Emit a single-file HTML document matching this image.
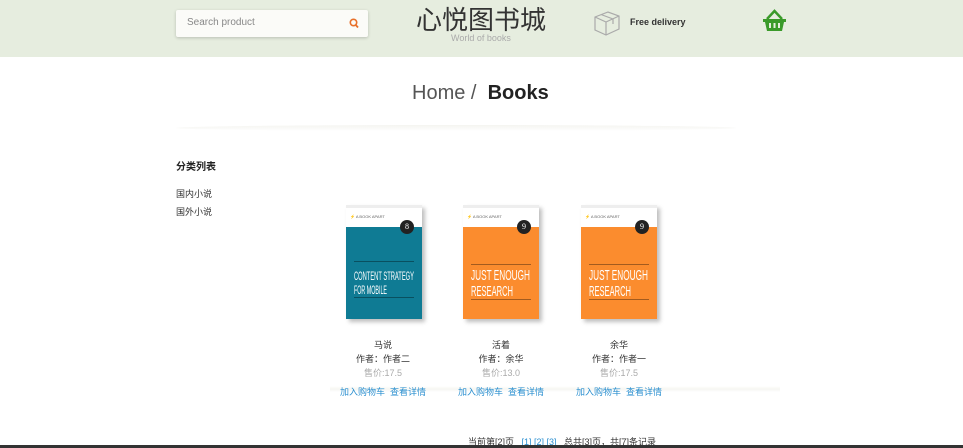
<!DOCTYPE html><html><head><meta charset="utf-8"><style>
*{margin:0;padding:0;box-sizing:border-box}
body{width:963px;height:448px;overflow:hidden;background:#fff;font-family:"Liberation Sans","Noto Sans CJK SC",sans-serif;position:relative}
.hdr{position:absolute;left:0;top:0;width:963px;height:57px;background:#e6eddf}
.abs{position:absolute}
.search{left:176px;top:10px;width:192px;height:27px;background:#fbfbf8;border-radius:2px;box-shadow:0 1px 3px rgba(0,0,0,.2);font-size:10px;color:#888;padding:7px 11px}
.book{position:absolute;top:205px;width:78px;height:118px}
.bk{position:absolute;left:0;top:0;width:76px;height:114px;box-shadow:3px 3px 4px rgba(0,0,0,.25);border-top:3px solid #eee;overflow:hidden}
.top{height:19px;background:#fff;font-size:4px;color:#666;padding:6px 4px;white-space:nowrap}
.num{position:absolute;right:8px;top:12px;width:14px;height:14px;border-radius:50%;background:#222;color:#fff;font-size:8px;text-align:center;line-height:14px;font-family:"Liberation Serif",serif}
.bk svg{position:absolute;left:0;top:0}
.info{position:absolute;top:338px;width:120px;text-align:center;font-size:9px;line-height:14px;color:#333;z-index:2}
.info .p{color:#aaa}
.info .l{color:#2a8fd0;margin-top:5px}
</style></head><body>
<div class="hdr"></div>
<div class="abs search">Search product<svg style="position:absolute;right:9px;top:8px" width="10" height="11" viewBox="0 0 10 11"><circle cx="4.5" cy="4.5" r="3.2" fill="none" stroke="#e8702a" stroke-width="1.6"/><path d="M6.8 7 L9 9.5" stroke="#e8702a" stroke-width="1.8"/></svg></div>
<div class="abs" style="left:416px;top:5px;font-size:26px;color:#333;line-height:30px">心悦图书城</div>
<div class="abs" style="left:451px;top:33px;font-size:9px;color:#aaa">World of books</div>
<svg class="abs" style="left:592px;top:9px" width="30" height="28" viewBox="0 0 30 28"><path d="M3 8 L16 3 L27 7 L27 20 L14 26 L3 21 Z M3 8 L14 13 L27 7 M14 13 L14 26 M9 5.5 L21 10 L21 15" fill="none" stroke="#aaa" stroke-width="1.2"/></svg>
<div class="abs" style="left:630px;top:17px;font-size:9px;color:#333;font-weight:bold">Free delivery</div>
<svg class="abs" style="left:762px;top:9px" width="25" height="24" viewBox="0 0 25 24"><path d="M5 10 L12.5 2 L20 10" fill="none" stroke="#3a9a2a" stroke-width="2.5"/><path d="M1 10 H24 V13 H22 L20 22 H5 L3 13 H1 Z" fill="#3a9a2a"/><path d="M8 14 V19 M12.5 14 V19 M17 14 V19" stroke="#e6eddf" stroke-width="2"/></svg>
<div class="abs" style="left:412px;top:82px;font-size:20px;color:#555">Home /&nbsp; <b style="color:#222;font-weight:bold">Books</b></div>
<div class="abs" style="left:176px;top:125px;width:560px;height:6px;background:linear-gradient(#f4f4f0,#fff);border-radius:50%"></div>
<div class="abs" style="left:176px;top:158px;font-size:10px;font-weight:bold;color:#222">分类列表</div>
<div class="abs" style="left:176px;top:185px;font-size:9px;color:#333;line-height:18px">国内小说<br>国外小说</div>
<div class="abs" style="left:330px;top:386px;width:450px;height:6px;background:linear-gradient(#fff,#f6f6f2,#fff)"></div>

<div class="book" style="left:346px"><div class="bk" style="background:#0f7b94"><div class="top">⚡ A BOOK APART</div><div class="num">8</div>
<svg width="76" height="111"><path d="M8 53.5H68M8 89.5H68" stroke="rgba(0,0,0,.35)"/><g fill="#fff" font-family="Liberation Sans Narrow,Liberation Sans,sans-serif" font-size="12"><text x="8" y="72" textLength="60" lengthAdjust="spacingAndGlyphs">CONTENT STRATEGY</text><text x="8" y="86" textLength="33" lengthAdjust="spacingAndGlyphs">FOR MOBILE</text></g></svg></div></div>
<div class="book" style="left:463px"><div class="bk" style="background:#fb8c2e"><div class="top">⚡ A BOOK APART</div><div class="num">9</div>
<svg width="76" height="111"><path d="M8 56.5H68M8 91.5H68" stroke="rgba(0,0,0,.35)"/><g fill="#fff" font-family="Liberation Sans Narrow,Liberation Sans,sans-serif" font-size="15"><text x="8" y="72" textLength="59" lengthAdjust="spacingAndGlyphs">JUST ENOUGH</text><text x="8" y="88" textLength="42" lengthAdjust="spacingAndGlyphs">RESEARCH</text></g></svg></div></div>
<div class="book" style="left:581px"><div class="bk" style="background:#fb8c2e"><div class="top">⚡ A BOOK APART</div><div class="num">9</div>
<svg width="76" height="111"><path d="M8 56.5H68M8 91.5H68" stroke="rgba(0,0,0,.35)"/><g fill="#fff" font-family="Liberation Sans Narrow,Liberation Sans,sans-serif" font-size="15"><text x="8" y="72" textLength="59" lengthAdjust="spacingAndGlyphs">JUST ENOUGH</text><text x="8" y="88" textLength="42" lengthAdjust="spacingAndGlyphs">RESEARCH</text></g></svg></div></div>

<div class="info" style="left:323px">马说<br>作者：作者二<div class="p">售价:17.5</div><div class="l">加入购物车 &nbsp;查看详情</div></div>
<div class="info" style="left:441px">活着<br>作者：余华<div class="p">售价:13.0</div><div class="l">加入购物车 &nbsp;查看详情</div></div>
<div class="info" style="left:559px">余华<br>作者：作者一<div class="p">售价:17.5</div><div class="l">加入购物车 &nbsp;查看详情</div></div>
<div class="abs" style="left:468px;top:435px;font-size:9px;color:#333;white-space:nowrap">当前第[2]页 &nbsp;&nbsp;<span style="color:#2a8fd0">[1] [2] [3]</span> &nbsp;&nbsp;总共[3]页，共[7]条记录</div>
<div class="abs" style="left:0;top:445px;width:963px;height:3px;background:#333"></div>
</body></html>
